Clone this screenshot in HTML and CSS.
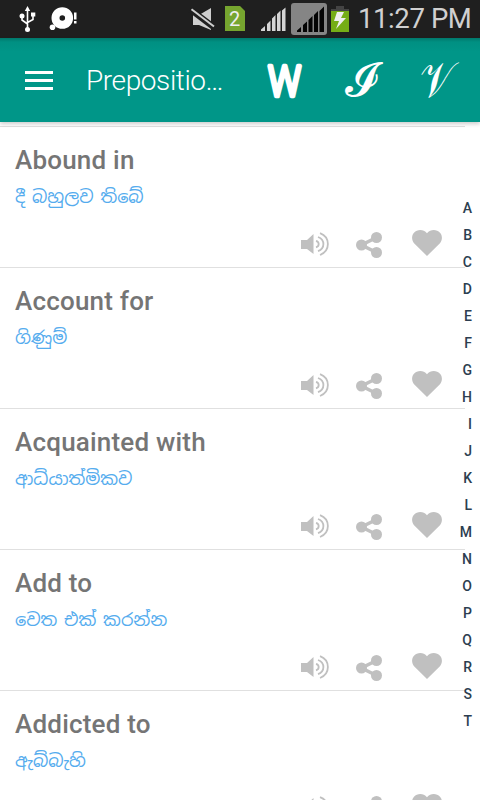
FILE: index.html
```html
<!DOCTYPE html>
<html lang="en">
<head>
<meta charset="UTF-8" />
<title>Prepositions</title>
<link rel="stylesheet" href="styles.css">
</head>
<body>

<svg class="sprite" aria-hidden="true">
  <symbol id="sound" viewBox="0 0 30 26">
    <path d="M1 9h6l6.500-6v20L7 18H1z" fill="currentColor"/>
    <path d="M16 9.800c3.600 1 3.600 5.600 0 6.600M18 6c7.200 2.600 7.200 11.600 0 14.200M20 2.200c10.500 4 10.500 17.800 0 21.800" fill="none" stroke="currentColor" stroke-width="1.800"/>
  </symbol>
  <symbol id="share" viewBox="0 0 26 26">
    <path d="M20.500 5.500L5.500 13l15 7.500" fill="none" stroke="currentColor" stroke-width="3.600"/>
    <circle cx="20.500" cy="5.500" r="5.500" fill="currentColor"/>
    <circle cx="5.500" cy="13" r="5.500" fill="currentColor"/>
    <circle cx="20.500" cy="20.500" r="5.500" fill="currentColor"/>
  </symbol>
  <symbol id="heart" viewBox="0 0 30 26">
    <path d="M15 26L2.300 13.500C-.5 10.500-.7 5.500 2 2.700 5.300-.8 11.500-1 15 3.300 18.500-1 24.700-.8 28 2.700c2.700 2.800 2.500 7.800-.3 10.800z" fill="currentColor"/>
  </symbol>
</svg>

<div class="status">
  <svg class="status-icons" viewBox="0 0 350 38" fill="none">
    <!-- usb -->
    <path d="M27.500 9v20M22 17v3l5.500 4M33 15v4.500l-5.500 3" stroke="#fff" stroke-width="1.600"/>
    <path d="M24.800 11L27.500 6l2.700 5zM31 12.500h4.300v4H31z" fill="#fff"/>
    <circle cx="22" cy="16" r="2.500" fill="#fff"/>
    <circle cx="27.500" cy="29.500" r="2.500" fill="#fff"/>
    <!-- disc -->
    <circle cx="62.300" cy="18" r="6.800" stroke="#fff" stroke-width="8"/>
    <circle cx="52.500" cy="27.200" r="2.800" fill="#fff"/>
    <path d="M74 12.500h2.500v7H74zM74 21h2.500v2.500H74z" fill="#fff"/>
    <!-- muted -->
    <path d="M193 15h6l12-7v22l-12-5h-6z" fill="#cfcfcf"/>
    <path d="M190.500 9.500l23 17.500" stroke="#1f1f1f" stroke-width="6"/>
    <path d="M191.500 9.300l22.500 17.200" stroke="#cfcfcf" stroke-width="2"/>
    <!-- sim -->
    <path d="M225 6h15l5 5v20h-20z" fill="#76a52f"/>
    <!-- signal -->
    <path d="M261 31v-1.500l4-3.500v5zM267 31v-7l3.500-3.500V31zM272 31V18.500l3.500-3.500v16zM277 31V14l3.500-3.500V31zM282 31V10.500l3.500-3V31z" fill="#d5d5d5"/>
    <rect x="291" y="3" width="36" height="32" rx="3" fill="#858585"/>
    <path d="M297 32v-1.500l4-3.500v5zM303 32v-7l4-3.500V32zM308.500 32V20l4-4v16zM314 32V15l4-4v21zM319.500 32V11l4.500-4.500V32z" fill="#050505"/>
    <!-- battery -->
    <path d="M336 6h8v3h5v2h-18V9h5z" fill="#444"/>
    <path d="M331 11h18v21h-18z" fill="#75ad16"/>
    <path d="M337 12h7l-3 6h5l-10 11 3-8h-5z" fill="#eee"/>
  </svg>
  <span class="sim">2</span>
  <span class="clock">11:27 PM</span>
</div>

<div class="toolbar">
  <div class="menu"><i></i><i></i><i></i></div>
  <div class="title">Prepositio…</div>
  <svg class="tab tab-w" viewBox="0 0 78 84">
    <text x="38.500" y="57.500" textLength="33" lengthAdjust="spacingAndGlyphs">W</text>
  </svg>
  <svg class="tab tab-i" viewBox="0 0 78 84">
    <text x="37" y="58">𝓘</text>
  </svg>
  <svg class="tab tab-v" viewBox="0 0 78 84">
    <text x="35" y="59" textLength="34" lengthAdjust="spacingAndGlyphs">𝒱</text>
  </svg>
</div>

<div class="content">
  <div class="list" id="list"></div>
  <div class="index" id="index"></div>
</div>

<script>
  const words = [
    { en: "Abound in", si: "දී බහුලව තිබේ" },
    { en: "Account for", si: "ගිණුම්" },
    { en: "Acquainted with", si: "ආධ්යාත්මිකව" },
    { en: "Add to", si: "වෙත එක් කරන්න" },
    { en: "Addicted to", si: "ඇබ්බැහි" }
  ];

  document.getElementById("list").innerHTML = words.map(w => `
    <div class="item">
      <h3>${w.en}</h3>
      <p lang="si">${w.si}</p>
      <div class="actions">
        <svg class="sound"><use href="#sound"/></svg>
        <svg class="share"><use href="#share"/></svg>
        <svg class="heart"><use href="#heart"/></svg>
      </div>
    </div>`).join("");

  document.getElementById("index").innerHTML =
    [..."ABCDEFGHIJKLMNOPQRST"].map(l => `<span>${l}</span>`).join("");
</script>

</body>
</html>
```

FILE: styles.css
```css
* {
  box-sizing: border-box;
}
body {
  margin: 0;
  height: 800px;
  display: flex;
  flex-direction: column;
  overflow: hidden;
  background: #fff;
  font-family: Roboto, "Noto Sans Sinhala", "Noto Sans", sans-serif;
}
.sprite {
  display: none;
}
.status {
  position: relative;
  flex: none;
  height: 38px;
  display: flex;
  background: #1f1f1f;
  color: #d0d0d0;
}
.status-icons {
  width: 350px;
  height: 38px;
}
.sim {
  position: absolute;
  left: 229px;
  top: 8px;
  font-size: 20px;
  line-height: 23px;
  color: #eee;
}
.clock {
  margin-left: 8px;
  font-size: 27.5px;
  letter-spacing: -0.4px;
  line-height: 38px;
  white-space: nowrap;
}
.toolbar {
  position: relative;
  z-index: 1;
  flex: none;
  height: 84px;
  display: flex;
  align-items: center;
  background: linear-gradient(#00786c, #009082 4px, #009688 14px);
  box-shadow: 0 2px 4px rgba(0, 0, 0, 0.2);
  color: #fff;
}
.menu {
  width: 28px;
  margin-left: 25px;
  display: grid;
  gap: 5px;
}
.menu i {
  height: 3px;
  background: #fff;
}
.title {
  width: 160px;
  margin-left: 33px;
  font-size: 28px;
  font-weight: 300;
  letter-spacing: -0.4px;
}
.tab {
  width: 78px;
  height: 84px;
  fill: #fff;
  text-anchor: middle;
}
.tab-w {
  font: 300 43px Roboto, sans-serif;
  stroke: #fff;
  stroke-width: 4.4px;
  stroke-linejoin: round;
}
.tab-i,
.tab-v {
  font-family: "DejaVu Serif", "DejaVu Sans", serif;
  font-size: 50px;
}
.tab-i {
  font-size: 47px;
}
.content {
  position: relative;
  flex: 1;
  min-height: 0;
  padding-top: 4px;
  overflow: hidden;
}
.list {
  width: 465px;
}
.item {
  height: 141px;
  padding: 15px 23px 0 15px;
  border-top: 1px solid #e0e0e0;
}
.item h3 {
  margin: 0;
  font-size: 26px;
  font-weight: 500;
  letter-spacing: 0.2px;
  line-height: 36px;
  color: #757575;
}
.item p {
  margin: 4px 0 0;
  font-size: 17.7px;
  word-spacing: 2.4px;
  line-height: 30px;
  color: #55acee;
}
.actions {
  display: flex;
  justify-content: flex-end;
  margin-top: 18px;
  color: #c0c0c0;
}
.sound {
  width: 30px;
  height: 26px;
  margin-top: 1px;
}
.share {
  width: 26px;
  height: 26px;
  margin: 2px 30px 0 26px;
}
.heart {
  width: 30px;
  height: 26px;
}
.index {
  position: absolute;
  top: 73px;
  right: 8px;
  display: flex;
  flex-direction: column;
  text-align: right;
  font-size: 14px;
  font-weight: 500;
  line-height: 27px;
  color: #2c3e50;
}
```
